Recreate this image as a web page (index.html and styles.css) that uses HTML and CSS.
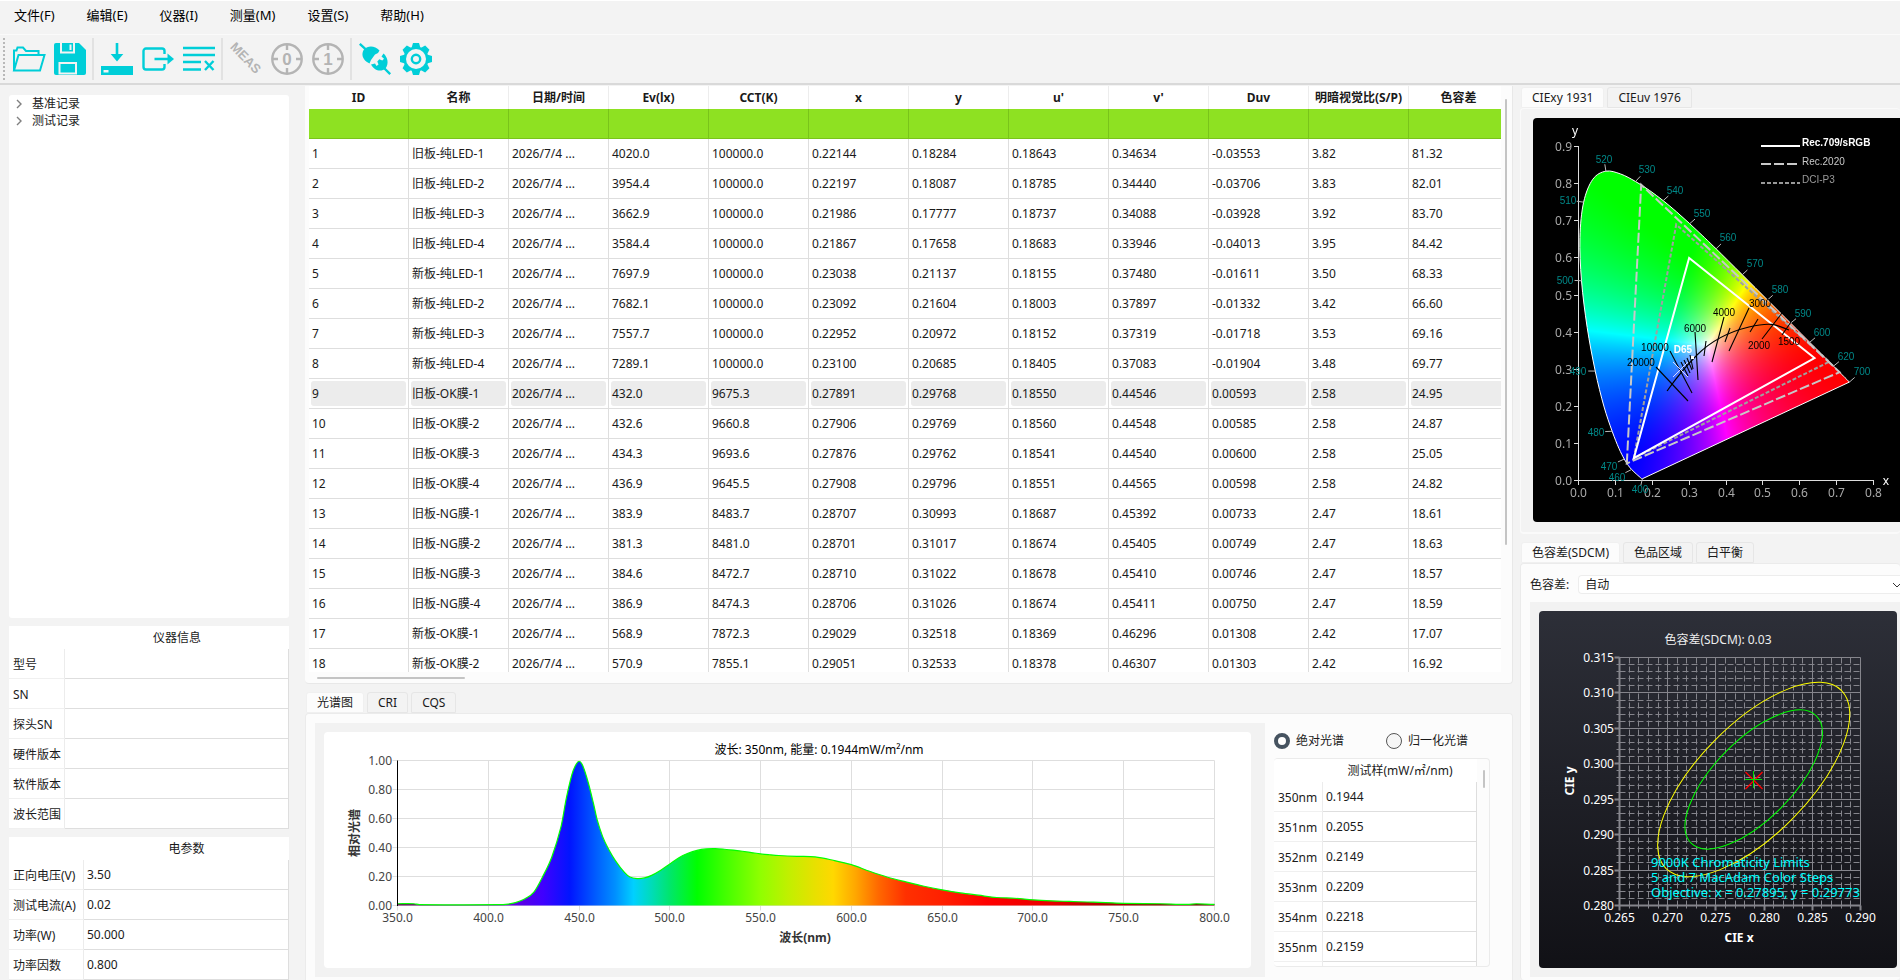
FILE: index.html
```html
<!DOCTYPE html>
<html lang="zh-CN">
<head>
<meta charset="utf-8">
<title>光谱测量</title>
<link rel="stylesheet" href="styles.css">
</head>
<body>
<div class="app">
  <nav class="menubar">
    <button type="button">文件(F)</button>
    <button type="button">编辑(E)</button>
    <button type="button">仪器(I)</button>
    <button type="button">测量(M)</button>
    <button type="button">设置(S)</button>
    <button type="button">帮助(H)</button>
  </nav>

  <div class="toolbar" role="toolbar" aria-label="工具栏">
    <span class="grip"></span>
    <button type="button" aria-label="打开"><svg viewBox="0 0 32 32"><path class="line thin" d="M1 27.5V7.500h2.500L4.500 4.500H10l3 3.500h12.500V12M5.500 12h26l-4.500 15.500H1z"/></svg></button>
    <button type="button" aria-label="保存"><svg viewBox="0 0 32 32"><path class="solid" d="M2 0h23l7 7v23a2 2 0 0 1-2 2H2a2 2 0 0 1-2-2V2a2 2 0 0 1 2-2z"/><path class="cut" d="M7 0v9.500h13V0M16.500 1.500V7M5.500 20h16.500v10.500H5.500z"/></svg></button>
    <span class="sep"></span>
    <button type="button" aria-label="下载"><svg viewBox="0 0 32 32"><path class="solid" d="M0 23h32v9H0zM14.700 0h2.600v11h5L16 18.500 9.700 11h5z"/><path class="hole" d="M2.500 27h5v2.500h-5z"/></svg></button>
    <button type="button" aria-label="导出"><svg viewBox="0 0 32 32"><path class="line" d="M22.500 11V8a2.500 2.500 0 0 0-2.500-2.500H4A2.500 2.500 0 0 0 1.500 8v16A2.500 2.500 0 0 0 4 26.500h16a2.500 2.500 0 0 0 2.500-2.500v-3M12.500 16H28"/><path class="solid" d="M25.500 10.500L32 16l-6.500 5.500z"/></svg></button>
    <button type="button" aria-label="清空列表"><svg viewBox="0 0 32 32"><path class="line" d="M0 5h32M0 12h32M0 19h18M0 26.500h18M22 18l8.500 9M30.500 18L22 27"/></svg></button>
    <span class="sep"></span>
    <button type="button" class="off" aria-label="测量"><svg viewBox="0 0 32 32"><text class="meas" x="15" y="20" transform="rotate(46 16 16)">MEAS</text></svg></button>
    <button type="button" class="off" aria-label="校零"><svg viewBox="0 0 32 32"><circle class="line" cx="16" cy="16" r="14.700"/><path class="line" d="M16 1v6M16 25v6M1 16h6M25 16h6"/><text class="num" x="16" y="22">0</text></svg></button>
    <button type="button" class="off" aria-label="校一"><svg viewBox="0 0 32 32"><circle class="line" cx="16" cy="16" r="14.700"/><path class="line" d="M16 1v6M16 25v6M1 16h6M25 16h6"/><text class="num" x="16" y="22">1</text></svg></button>
    <span class="sep"></span>
    <button type="button" aria-label="连接"><svg viewBox="0 0 32 32"><path class="line" d="M.8 .8l6 5.500M25 25l6.200 6.200"/><path class="solid" d="M5 6.500C9 2 16 2.500 20.500 7.500L19 10l-3 1.500-4 5.500-1.500 3.500C3 17 2 10.500 5 6.500z"/><path class="solid" d="M12 21.500l4-1 1.500 2.500 2-1.500-1.200-3 2-2.200 3 1.200 1.700-1.700-2.500-2.300 2-3C29 14.500 30 21 26.500 25.500 22 29.500 15 27.500 12 21.500z"/></svg></button>
    <button type="button" aria-label="设置"><svg viewBox="0 0 32 32"><g class="teeth"><path id="tooth" d="M11.500 5l1.500-5h6l1.500 5z"/><use href="#tooth" transform="rotate(45 16 16)"/><use href="#tooth" transform="rotate(90 16 16)"/><use href="#tooth" transform="rotate(135 16 16)"/><use href="#tooth" transform="rotate(180 16 16)"/><use href="#tooth" transform="rotate(225 16 16)"/><use href="#tooth" transform="rotate(270 16 16)"/><use href="#tooth" transform="rotate(315 16 16)"/><circle cx="16" cy="16" r="12.500"/></g><circle class="hole" cx="16" cy="16" r="10"/><circle class="line" cx="16" cy="16" r="4.200"/></svg></button>
  </div>

  <main class="workspace">
    <aside class="side">
      <ul class="tree">
        <li><button type="button"><svg viewBox="0 0 6 10"><path d="M1 1l4 4-4 4"/></svg>基准记录</button></li>
        <li><button type="button"><svg viewBox="0 0 6 10"><path d="M1 1l4 4-4 4"/></svg>测试记录</button></li>
      </ul>
      <table class="props info">
        <thead><tr><th></th><th scope="col">仪器信息</th></tr></thead>
        <tbody>
          <tr><th scope="row">型号</th><td></td></tr>
          <tr><th scope="row">SN</th><td></td></tr>
          <tr><th scope="row">探头SN</th><td></td></tr>
          <tr><th scope="row">硬件版本</th><td></td></tr>
          <tr><th scope="row">软件版本</th><td></td></tr>
          <tr><th scope="row">波长范围</th><td></td></tr>
        </tbody>
      </table>
      <table class="props elec">
        <thead><tr><th></th><th scope="col">电参数</th></tr></thead>
        <tbody>
          <tr><th scope="row">正向电压(V)</th><td>3.50</td></tr>
          <tr><th scope="row">测试电流(A)</th><td>0.02</td></tr>
          <tr><th scope="row">功率(W)</th><td>50.000</td></tr>
          <tr><th scope="row">功率因数</th><td>0.800</td></tr>
        </tbody>
      </table>
    </aside>

    <section class="center">
      <div class="records-pane">
        <div class="records-view">
          <table class="records">
            <thead><tr><th>ID</th><th>名称</th><th>日期/时间</th><th>Ev(lx)</th><th>CCT(K)</th><th>x</th><th>y</th><th>u'</th><th>v'</th><th>Duv</th><th>明暗视觉比(S/P)</th><th>色容差</th></tr></thead>
            <tbody id="records"></tbody>
          </table>
        </div>
        <span class="bar bar-v"></span>
        <span class="bar bar-h"></span>
      </div>

      <div class="tabs">
        <button type="button" class="tab active">光谱图</button>
        <button type="button" class="tab">CRI</button>
        <button type="button" class="tab">CQS</button>
      </div>
      <div class="pane spectrum-pane">
        <div class="view">
          <svg id="spectrum" class="card white" viewBox="0 0 927 236"></svg>
        </div>
        <div class="samples">
          <div class="modes">
            <label><input type="radio" name="mode" checked>绝对光谱</label>
            <label><input type="radio" name="mode">归一化光谱</label>
          </div>
          <div class="samples-box">
            <table class="props sample">
              <thead><tr><th></th><th scope="col">测试样(mW/㎡/nm)</th></tr></thead>
              <tbody>
                <tr><th scope="row">350nm</th><td>0.1944</td></tr>
                <tr><th scope="row">351nm</th><td>0.2055</td></tr>
                <tr><th scope="row">352nm</th><td>0.2149</td></tr>
                <tr><th scope="row">353nm</th><td>0.2209</td></tr>
                <tr><th scope="row">354nm</th><td>0.2218</td></tr>
                <tr><th scope="row">355nm</th><td>0.2159</td></tr>
                <tr><th scope="row"></th><td></td></tr>
              </tbody>
            </table>
            <span class="bar bar-s"></span>
          </div>
        </div>
      </div>
    </section>

    <section class="right">
      <div class="tabs">
        <button type="button" class="tab active">CIExy 1931</button>
        <button type="button" class="tab">CIEuv 1976</button>
      </div>
      <div class="pane cie-pane">
        <div class="cie card">
          <canvas id="gamut" width="367" height="404"></canvas>
          <svg id="cie" viewBox="0 0 367 404"></svg>
        </div>
      </div>
      <div class="tabs lower">
        <button type="button" class="tab active">色容差(SDCM)</button>
        <button type="button" class="tab">色品区域</button>
        <button type="button" class="tab">白平衡</button>
      </div>
      <div class="pane sdcm-pane">
        <div class="field">
          <label for="sdcm-mode">色容差:</label>
          <div class="combo">
            <select id="sdcm-mode"><option>自动</option></select>
            <svg viewBox="0 0 10 6"><path d="M1 1l4 4 4-4"/></svg>
          </div>
        </div>
        <div class="view">
          <svg id="sdcm" class="card dark" viewBox="0 0 358 357"></svg>
        </div>
      </div>
    </section>
  </main>
</div>
<script src="script.js"></script>
</body>
</html>
```
FILE: styles.css
```css
* { box-sizing: border-box; }

body {
  margin: 0;
  background: #f3f3f3;
  color: #1a1a1a;
  font: 12px/16px "Noto Sans", "Noto Sans CJK SC", sans-serif;
  overflow: hidden;
}

button, select, input { font: inherit; color: inherit; margin: 0; }
button { border: 0; background: none; padding: 0; }
table { border-collapse: separate; border-spacing: 0; }

.app { display: flex; flex-direction: column; height: 100vh; border-top: 1px solid #fff; }

/* menu and toolbar */
.menubar {
  display: flex;
  gap: 32px;
  padding: 4px 14px 9px;
  border-bottom: 1px solid #fafafa;
  font-size: 13px;
  line-height: 20px;
  color: #000;
}
.toolbar {
  display: flex;
  align-items: center;
  gap: 9px;
  height: 50px;
  padding: 0 3px;
  border-bottom: 2px solid #d9d9d9;
}
.toolbar button { width: 32px; height: 32px; color: #00ced8; }
.toolbar button.off { color: #b4b4b4; }
.toolbar svg { display: block; width: 32px; height: 32px; overflow: visible; }
.grip { width: 2px; height: 42px; margin-right: -1px; background: repeating-linear-gradient(#b8b8b8 0 2px, transparent 2px 4px); }
.sep { width: 2px; height: 42px; margin: 0 -2px 0 -3px; background: #e2e2e2; }
.line { fill: none; stroke: currentColor; stroke-width: 2.4; }
.thin { stroke-width: 2; }
.solid { fill: currentColor; }
.cut { fill: none; stroke: #f3f3f3; stroke-width: 2; }
.hole { fill: #f3f3f3; }
.teeth { fill: currentColor; }

/* workspace */
.workspace {
  flex: 1;
  min-height: 0;
  display: grid;
  grid-template-columns: 280px minmax(0, 1fr) 380px;
  grid-template-rows: minmax(0, 1fr);
  padding: 1px 0 0 9px;
}
.side { display: flex; flex-direction: column; gap: 8px; padding-top: 9px; min-height: 0; }
.tree { flex: 1; margin: 0; padding: 0; list-style: none; background: #fff; border-radius: 3px; }
.tree li { height: 17px; }
.tree button { display: flex; align-items: center; gap: 10px; height: 17px; padding-left: 7px; }
.tree svg { width: 6px; height: 10px; fill: none; stroke: #808080; stroke-width: 1.4; }

.props { width: 100%; table-layout: fixed; background: #fff; flex: none; }
.props thead th { height: 23px; padding: 0; font-weight: 400; text-align: center; }
.props tbody th { height: 30px; padding: 2px 0 0 4px; font-weight: 400; text-align: left; white-space: nowrap; border-right: 1px solid #ececec; border-bottom: 1px solid #f0f0f0; }
.props td { height: 30px; padding: 0 0 0 3px; border-right: 1px solid #dedede; border-bottom: 1px solid #dedede; }
.info th:first-child { width: 56px; }
.elec th:first-child { width: 75px; }
.sample th:first-child { width: 49px; }

/* record table */
.center { display: flex; flex-direction: column; min-width: 0; min-height: 0; margin: 0 7px 0 16px; }
.records-pane {
  position: relative;
  flex: 1;
  min-height: 0;
  padding: 0 11px 11px 4px;
  background: #fcfcfc;
  border-bottom: 1px solid #e8e8e8;
  border-right: 1px solid #e8e8e8;
  border-radius: 0 0 4px 4px;
}
.records-view { height: 100%; overflow: hidden; background: #fff; }
.records { width: 1200px; table-layout: fixed; }
.records th { height: 23px; padding: 0; font-weight: 700; white-space: nowrap; border-right: 1px solid #ededed; }
.records td { position: relative; z-index: 0; height: 30px; padding: 0 3px; white-space: nowrap; border-right: 1px solid #dedede; border-bottom: 1px solid #dedede; }
.records .filter td { background: #8ee122; border-color: #79c41a; }
.records .selected td::before { content: ""; position: absolute; z-index: -1; inset: 2px; background: #ececec; border-radius: 3px; }
.bar { position: absolute; background: #c4c4c4; border-radius: 1px; }
.bar-v { top: 13px; right: 5px; width: 2px; bottom: 138px; }
.bar-h { left: 12px; bottom: 4px; width: 148px; height: 2px; }

/* tabs and panes */
.tabs { display: flex; gap: 3px; padding: 1px 1px 0; }
.records-pane + .tabs { margin-top: 7px; }
.tab { height: 21px; padding: 0 10px 1px; line-height: 20px; border: 1px solid #e6e6e6; border-radius: 3px 3px 0 0; background: #f3f3f3; }
.tab.active { background: #fcfcfc; border-color: #f0f0f0; padding-bottom: 2px; }
.pane { background: #fcfcfc; border: 1px solid #ebebeb; border-radius: 4px; }
.view { background: #f2f2f2; padding: 9px; min-width: 0; }
.card { display: block; width: 100%; height: auto; border-radius: 4px; }
.white { background: #fff; }
.dark { background: linear-gradient(#2d2f38, #111116); }

.spectrum-pane { display: grid; grid-template-columns: minmax(0, 1fr) 247px; padding: 9px 0 3px 9px; border-bottom: 0; border-radius: 4px 4px 0 0; }
.spectrum-pane .view { padding-right: 14px; }
.samples { padding: 10px 0 0 9px; }
.modes { display: flex; gap: 24px; margin-bottom: 9px; }
.modes label { display: flex; align-items: center; gap: 6px; width: 88px; white-space: nowrap; }
.modes input { appearance: none; flex: none; width: 16px; height: 16px; border: 1px solid #555; border-radius: 50%; background: #f6f6f6; }
.modes input:checked { border: 4px solid #465360; background: #fff; }
.samples-box { position: relative; width: 216px; height: 209px; overflow: hidden; padding-right: 12px; border: 1px solid #ebebeb; border-left: 0; border-radius: 4px; }
.bar-s { top: 11px; right: 4px; width: 2px; height: 18px; }

.right { min-width: 0; }
.cie-pane { padding: 9px 0 10px 12px; background: #f3f3f3; border: 1px solid #fafafa; border-right: 0; border-bottom: 2px solid #fafafa; }
.cie { display: grid; background: #000; border-radius: 4px 0 0 4px; }
.cie canvas, .cie svg { grid-area: 1 / 1; display: block; width: 100%; height: auto; }
.lower { margin-top: 7px; }
.sdcm-pane { padding: 11px 0 3px 9px; border-right: 0; border-bottom: 0; }
.sdcm-pane .view { padding-right: 3px; }
.field { display: flex; align-items: center; gap: 9px; margin-bottom: 8px; }
.combo { position: relative; flex: 1; overflow: hidden; border: 1px solid #ededed; border-right: 0; border-radius: 4px 0 0 4px; background: #fff; }
.combo select { appearance: none; display: block; width: 100%; height: 17px; padding: 0 6px; border: 0; background: none; line-height: 16px; }
.combo svg { position: absolute; right: -2px; top: 6px; width: 10px; height: 6px; fill: none; stroke: #333; }

/* chart text */
svg text { font-family: "Noto Sans", "Noto Sans CJK SC", sans-serif; font-size: 12px; }
svg text.meas { font: 700 13px "Liberation Sans", sans-serif; text-anchor: middle; fill: currentColor; }
svg text.num { font: 700 17px "Liberation Sans", sans-serif; text-anchor: middle; fill: currentColor; }
svg text.small { font-family: "Liberation Sans", sans-serif; font-size: 10px; }
svg text.note { font-size: 13px; }
svg text.bold { font-weight: 700; }
```
FILE: script.js
```js
const T = '2026/7/4 ...';
const K = '100000.0';
const records = [
  ['旧板-纯LED-1', T, '4020.0', K, '0.22144', '0.18284', '0.18643', '0.34634', '-0.03553', '3.82', '81.32'],
  ['旧板-纯LED-2', T, '3954.4', K, '0.22197', '0.18087', '0.18785', '0.34440', '-0.03706', '3.83', '82.01'],
  ['旧板-纯LED-3', T, '3662.9', K, '0.21986', '0.17777', '0.18737', '0.34088', '-0.03928', '3.92', '83.70'],
  ['旧板-纯LED-4', T, '3584.4', K, '0.21867', '0.17658', '0.18683', '0.33946', '-0.04013', '3.95', '84.42'],
  ['新板-纯LED-1', T, '7697.9', K, '0.23038', '0.21137', '0.18155', '0.37480', '-0.01611', '3.50', '68.33'],
  ['新板-纯LED-2', T, '7682.1', K, '0.23092', '0.21604', '0.18003', '0.37897', '-0.01332', '3.42', '66.60'],
  ['新板-纯LED-3', T, '7557.7', K, '0.22952', '0.20972', '0.18152', '0.37319', '-0.01718', '3.53', '69.16'],
  ['新板-纯LED-4', T, '7289.1', K, '0.23100', '0.20685', '0.18405', '0.37083', '-0.01904', '3.48', '69.77'],
  ['旧板-OK膜-1', T, '432.0', '9675.3', '0.27891', '0.29768', '0.18550', '0.44546', '0.00593', '2.58', '24.95'],
  ['旧板-OK膜-2', T, '432.6', '9660.8', '0.27906', '0.29769', '0.18560', '0.44548', '0.00585', '2.58', '24.87'],
  ['旧板-OK膜-3', T, '434.3', '9693.6', '0.27876', '0.29762', '0.18541', '0.44540', '0.00600', '2.58', '25.05'],
  ['旧板-OK膜-4', T, '436.9', '9645.5', '0.27908', '0.29796', '0.18551', '0.44565', '0.00598', '2.58', '24.82'],
  ['旧板-NG膜-1', T, '383.9', '8483.7', '0.28707', '0.30993', '0.18687', '0.45392', '0.00733', '2.47', '18.61'],
  ['旧板-NG膜-2', T, '381.3', '8481.0', '0.28701', '0.31017', '0.18674', '0.45405', '0.00749', '2.47', '18.63'],
  ['旧板-NG膜-3', T, '384.6', '8472.7', '0.28710', '0.31022', '0.18678', '0.45410', '0.00746', '2.47', '18.57'],
  ['旧板-NG膜-4', T, '386.9', '8474.3', '0.28706', '0.31026', '0.18674', '0.45411', '0.00750', '2.47', '18.59'],
  ['新板-OK膜-1', T, '568.9', '7872.3', '0.29029', '0.32518', '0.18369', '0.46296', '0.01308', '2.42', '17.07'],
  ['新板-OK膜-2', T, '570.9', '7855.1', '0.29051', '0.32533', '0.18378', '0.46307', '0.01303', '2.42', '16.92']
];
document.getElementById('records').innerHTML =
  '<tr class="filter">' + '<td></td>'.repeat(12) + '</tr>' +
  records.map((r, i) => `<tr${i === 8 ? ' class="selected"' : ''}><td>${i + 1}</td>` +
    r.map(v => `<td>${v}</td>`).join('') + '</tr>').join('');

const text = (x, y, s, fill, anchor = 'middle', cls = '', extra = '') =>
  `<text x="${x}" y="${y}" fill="${fill}" text-anchor="${anchor}" class="${cls}" ${extra}>${s}</text>`;
const line = (x1, y1, x2, y2, stroke, w = 1, extra = '') =>
  `<line x1="${x1}" y1="${y1}" x2="${x2}" y2="${y2}" stroke="${stroke}" stroke-width="${w}" ${extra}/>`;

/* spectrum */
(function () {
  const L = 73.5, R = 890.5, top = 28.5, bottom = 173.5;
  const X = nm => L + (nm - 350) / 450 * (R - L);
  const Y = v => bottom - v * (bottom - top);
  const data = [[350,.012],[359,.012],[362,.006],[405,.006],[411,.01],[415,.02],[420,.045],[425,.09],[430,.2],[435,.335],[440,.54],[443,.74],[446,.9],[448,.965],[450,.995],[452,.965],[455,.85],[458,.7],[460,.59],[463,.475],[466,.395],[470,.31],[475,.228],[478,.196],[482,.186],[486,.19],[490,.208],[495,.243],[500,.287],[505,.33],[510,.36],[515,.38],[520,.39],[525,.392],[530,.388],[535,.382],[540,.374],[545,.365],[550,.356],[555,.35],[560,.345],[570,.339],[580,.335],[590,.312],[600,.282],[610,.236],[620,.195],[630,.163],[640,.133],[650,.108],[660,.087],[670,.071],[680,.055],[690,.05],[700,.039],[710,.032],[720,.028],[730,.024],[740,.02],[750,.015],[770,.012],[785,.008],[790,.012],[800,.008]];
  const stops = [[350,'#700060'],[400,'#7000a0'],[415,'#6000e0'],[430,'#4000ff'],[445,'#0015ff'],[460,'#0060ff'],[470,'#0090ff'],[480,'#00d0ff'],[490,'#00dcb8'],[500,'#00e66c'],[515,'#00ff00'],[530,'#40ff00'],[550,'#90ff00'],[565,'#c0f000'],[580,'#e8e000'],[590,'#ffd800'],[602,'#ffa800'],[615,'#ff6800'],[630,'#ff3000'],[650,'#ff2000'],[675,'#ff0000'],[710,'#e80000'],[740,'#b00000'],[800,'#700000']];
  let s = '<defs><linearGradient id="sp" gradientUnits="userSpaceOnUse" x1="' + L + '" x2="' + R + '" y1="0" y2="0">' +
    stops.map(([nm, c]) => `<stop offset="${(nm - 350) / 450}" stop-color="${c}"/>`).join('') + '</linearGradient></defs>';
  for (let i = 0; i <= 5; i++) {
    const y = Math.round(Y(i / 5) - .5) + .5;
    s += line(L - 5, y, R, y, '#dedede') + text(68, y + 4, (i / 5).toFixed(2), '#444', 'end');
  }
  for (let nm = 350; nm <= 800; nm += 50) {
    const x = Math.round(X(nm) - .5) + .5;
    s += line(x, top, x, bottom + 5, '#dedede') + text(x, 190, nm.toFixed(1), '#444');
  }
  let d = `M${X(350)} ${Y(data[0][1])}`;
  for (let i = 1; i < data.length; i++) {
    const p0 = data[Math.max(0, i - 2)], p1 = data[i - 1], p2 = data[i], p3 = data[Math.min(data.length - 1, i + 1)];
    const k = (p2[0] - p1[0]) / 3;
    const m1 = i > 1 ? (p2[1] - p0[1]) / (p2[0] - p0[0]) : 0;
    const m2 = i < data.length - 1 ? (p3[1] - p1[1]) / (p3[0] - p1[0]) : 0;
    d += `C${X(p1[0] + k)} ${Y(p1[1] + m1 * k)} ${X(p2[0] - k)} ${Y(p2[1] - m2 * k)} ${X(p2[0])} ${Y(p2[1])}`;
  }
  s += `<path d="${d}V${bottom}H${L}z" fill="url(#sp)"/><path d="${d}" fill="none" stroke="#00ff00" stroke-width="1.2"/>`;
  s += line(L, top, L, bottom + .5, '#000');
  s += text(495, 22, '波长: 350nm, 能量: 0.1944mW/m²/nm', '#000');
  s += text(481, 210, '波长(nm)', '#333', 'middle', 'bold');
  s += text(35, 101, '相对光谱', '#333', 'middle', 'bold', 'transform="rotate(-90 35 101)"');
  document.getElementById('spectrum').innerHTML = s;
})();

/* CIE 1931 diagram */
(function () {
  const X = x => 45.5 + x * 368.75, Y = y => 362.5 - y * 371;
  const locus = [[.1733,.0048],[.1714,.0051],[.1689,.0069],[.1644,.0109],[.1566,.0177],[.144,.0297],[.1355,.0399],[.1241,.0578],[.1096,.0868],[.0913,.1327],[.0687,.2007],[.0454,.295],[.0235,.4127],[.0082,.5384],[.0039,.6548],[.0139,.7502],[.0389,.812],[.0743,.8338],[.1142,.8262],[.1547,.8059],[.1929,.7816],[.2296,.7543],[.2658,.7243],[.3016,.6923],[.3373,.6589],[.3731,.6245],[.4441,.5547],[.5125,.4866],[.5752,.4242],[.627,.3725],[.6658,.334],[.6915,.3083],[.7079,.292],[.719,.2809],[.7347,.2653]];
  const pts = locus.map(([x, y]) => [X(x), Y(y)]);
  let d = `M${pts[0]}`;
  for (let i = 1; i < pts.length; i++) {
    const a = pts[Math.max(0, i - 2)], b = pts[i - 1], c = pts[i], e = pts[Math.min(pts.length - 1, i + 1)];
    d += `C${b[0] + (c[0] - a[0]) / 6} ${b[1] + (c[1] - a[1]) / 6} ${c[0] - (e[0] - b[0]) / 6} ${c[1] - (e[1] - b[1]) / 6} ${c[0]} ${c[1]}`;
  }
  d += 'z';

  /* fill: barycentric mix of the RGB primaries, balanced on the white point */
  const P = [[.64, .33], [.3, .6], [.15, .06]], W = [.35, .365];
  const bary = (x, y) => {
    const [a, b, c] = P;
    const D = (b[1] - c[1]) * (a[0] - c[0]) + (c[0] - b[0]) * (a[1] - c[1]);
    const u = ((b[1] - c[1]) * (x - c[0]) + (c[0] - b[0]) * (y - c[1])) / D;
    const v = ((c[1] - a[1]) * (x - c[0]) + (a[0] - c[0]) * (y - c[1])) / D;
    return [u, v, 1 - u - v];
  };
  const white = bary(W[0], W[1]);
  const cv = document.getElementById('gamut'), g = cv.getContext('2d');
  const img = g.createImageData(cv.width, cv.height);
  for (let py = 0; py < cv.height; py++) for (let px = 0; px < cv.width; px++) {
    const c = bary((px - 45) / 368.75, (362 - py) / 371).map((v, i) => Math.max(0, v / white[i]));
    const m = Math.max(...c), o = (py * cv.width + px) * 4;
    for (let i = 0; i < 3; i++) img.data[o + i] = 255 * Math.pow(c[i] / m, 1.15);
    img.data[o + 3] = 255;
  }
  g.putImageData(img, 0, 0);
  g.globalCompositeOperation = 'destination-in';
  g.fill(new Path2D(d));

  let s = `<path d="${d}" fill="none" stroke="#fff"/>`;
  s += line(45.5, 28, 45.5, 363, '#ddd') + line(45.5, 362.5, 341, 362.5, '#ddd');
  for (let i = 0; i <= 9; i++) {
    const y = Math.round(Y(i / 10) - .5) + .5;
    s += line(41, y, 45.5, y, '#ddd') + text(39, y + 4, (i / 10).toFixed(1), '#a8a8a8', 'end');
  }
  for (let i = 0; i <= 8; i++) {
    const x = Math.round(X(i / 10) - .5) + .5;
    s += line(x, 362.5, x, 367, '#ddd') + text(x, 379, (i / 10).toFixed(1), '#a8a8a8');
  }
  s += text(42, 17, 'y', '#fff') + text(353, 367, 'x', '#fff');

  const marks = [[520,71,41,17],[530,114,51,19],[540,142,72,21],[550,169,95,23],[560,195,119,25],[570,222,145,26],[580,247,171,27],[590,270,195,28],[600,289,214,29],[620,313,238,31],[700,329,253,34],[510,35,82,15],[500,32,162,13],[490,45,253,11],[480,63,314,9],[470,76,348,7],[460,84,359,5],[400,107,371,0]];
  for (const [nm, x, y, i] of marks) {
    const [a, b] = pts[i], q = Math.hypot(x - a, y - b);
    s += line(a, b, a + (x - a) / q * 7, b + (y - b) / q * 7, '#bbb');
    s += text(x, y + 4, nm, '#008888', 'middle', 'small');
  }
  const tri = (a, stroke, w, dash) => `<polygon points="${a.map(([x, y]) => X(x) + ',' + Y(y)).join(' ')}" fill="none" stroke="${stroke}" stroke-width="${w}" stroke-dasharray="${dash}"/>`;
  s += tri([[.15, .06], [.265, .69], [.68, .32]], '#a0a0a0', 2, '4 2');
  s += tri([[.131, .046], [.17, .797], [.708, .292]], '#c8c8c8', 2, '10 3');
  s += tri(P, '#fff', 2, 'none');

  const iso = [[123,249,155,283],[137,233,159,275],[148,244,155,258],[151,242,157,255],[154,240,159,252],[157,237,160,251],[162,214,165,262],[173,223,171,238],[191,199,179,244],[197,210,192,224],[216,190,196,233],[225,201,217,214],[249,195,229,221],[258,204,249,217]];
  for (const [a, b, c, e] of iso) s += line(a, b, c, e, '#000', 1.1);
  s += '<path d="M134 273C142 262 149 252 164 237S195 214 216 209S242 206 256 212" fill="none" stroke="#000" stroke-width="1.1"/>';
  s += '<path d="M140 244l15 15M155 244l-15 15" stroke="#d8d8ff"/><path d="M158 238h3v3h-3z" fill="#fff"/>';
  for (const [v, x, y] of [[3000,227,185],[4000,191,194],[6000,162,210],[10000,122,229],[20000,108,244],[2000,226,227],[1500,256,223]])
    s += text(x, y + 4, v, '#000', 'middle', 'small');
  s += text(150, 235, 'D65', '#fff', 'middle', 'small bold');

  s += line(228, 28, 267, 28, '#fff', 2) + text(269, 28, 'Rec.709/sRGB', '#fff', 'start', 'small bold');
  s += line(228, 46, 267, 46, '#c8c8c8', 2, 'stroke-dasharray="10 3"') + text(269, 47, 'Rec.2020', '#c8c8c8', 'start', 'small');
  s += line(228, 65, 267, 65, '#999', 2, 'stroke-dasharray="4 2"') + text(269, 65, 'DCI-P3', '#999', 'start', 'small');
  document.getElementById('cie').innerHTML = s;
})();

/* SDCM plot */
(function () {
  const L = 80.5, R = 321.5, top = 46.5, bottom = 294.5;
  const dash = 'stroke-dasharray="6 3"';
  let s = '';
  for (let i = 0; i <= 25; i++) {
    const x = Math.round(L + i * (R - L) / 25 - .5) + .5, major = i % 5 === 0;
    s += line(x, top, x, bottom, '#85858c', 1, major ? '' : dash) + line(x, bottom, x, bottom + (major ? 5 : 3), '#85858c', major ? 2 : 1);
    if (major) s += text(x, 311, (.265 + i / 1000).toFixed(3), '#fff');
  }
  for (let i = 0; i <= 35; i++) {
    const y = Math.round(bottom - i * (bottom - top) / 35 - .5) + .5, major = i % 5 === 0;
    s += line(L, y, R, y, '#85858c', 1, major ? '' : dash) + line(L - (major ? 5 : 3), y, L, y, '#85858c', major ? 2 : 1);
    if (major) s += text(75, y + 4, (.28 + i / 1000).toFixed(3), '#fff', 'end');
  }
  s += line(L, top, L, bottom, '#85858c', 2) + line(L, bottom, R, bottom, '#85858c', 2);
  const el = (a, b, c) => `<ellipse cx="214.7" cy="168.500" rx="${a}" ry="${b}" fill="none" stroke="${c}" transform="rotate(-45.500 214.700 168.500)"/>`;
  s += el(125, 55.2, '#ffff00') + el(89.3, 39.4, '#00ff00');
  s += '<path d="M206.500 161l17 17M223.500 161l-17 17" stroke="#f00" stroke-width="1.3"/><path d="M206 168.500h17M214.500 160v17" stroke="#0d0"/>';
  s += text(179, 33, '色容差(SDCM): 0.03', '#eee');
  s += text(200, 331, 'CIE x', '#fff', 'middle', 'bold') + text(35, 170, 'CIE y', '#fff', 'middle', 'bold', 'transform="rotate(-90 35 170)"');
  s += text(112, 256, '9000K Chromaticity Limits', '#00ffff', 'start', 'note');
  s += text(112, 271, '5 and 7 MacAdam Color Steps', '#00ffff', 'start', 'note');
  s += text(112, 286, 'Objective: x = 0.27895, y = 0.29773', '#00ffff', 'start', 'note');
  document.getElementById('sdcm').innerHTML = s;
})();
```
